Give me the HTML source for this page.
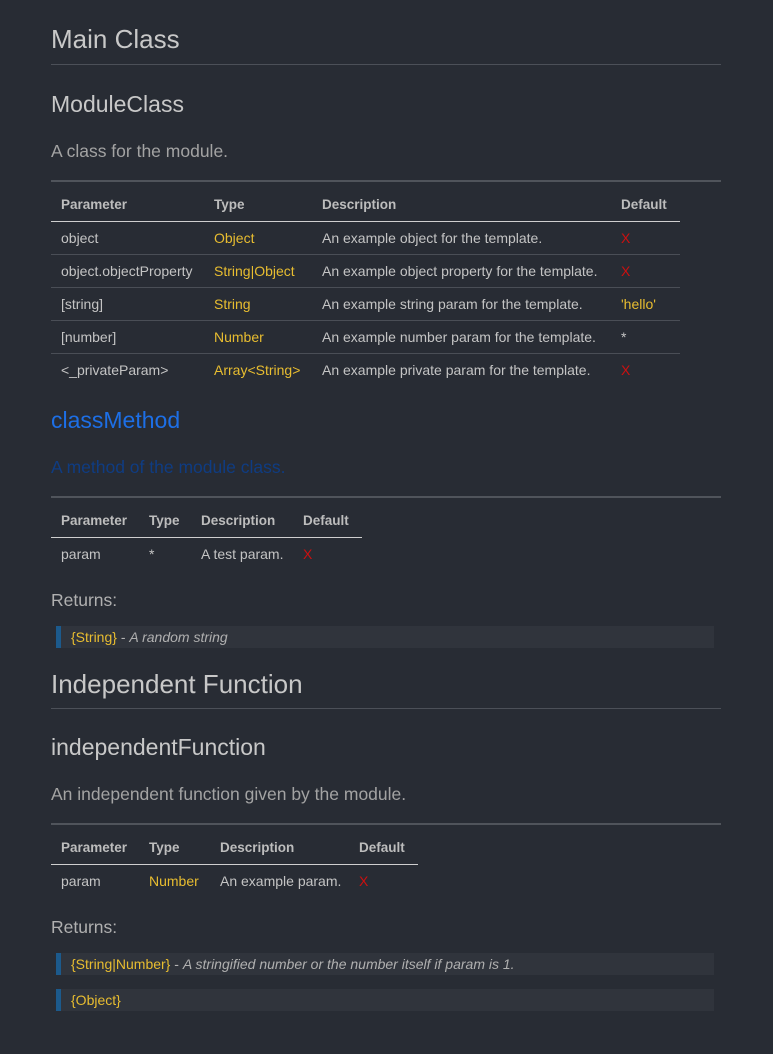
<!DOCTYPE html><html><head><style>
body{margin:0;background:#282c34;width:773px;height:1054px;position:relative;overflow:hidden;font-family:"Liberation Sans",sans-serif;color:#c9c9c9}
.a{position:absolute;white-space:nowrap}
.h1{font-size:26px;color:#c8c8c8}
.h2{font-size:23px;color:#c8c8c8}
.p{font-size:17.5px;color:#a3a3a3}
.line{position:absolute;left:51px;width:670px;height:1px;background:#4c5058}
.hr{position:absolute;left:51px;width:670px;height:2px;background:#50545b}
.t{font-size:14px;color:#c4c4c4}
.b{font-weight:bold;color:#bdbdbd;font-size:13.5px}
.y{color:#e8bd30}.r{color:#cc1010}
.hl{position:absolute;left:51px;height:1px;background:#cfcfcf}
.rl{position:absolute;left:51px;height:1px;background:#4a4e56}
.bq{position:absolute;left:56px;width:658px;height:22px;background:#30343c;border-left:5px solid #1c5a8c;box-sizing:border-box;font-size:14px;line-height:22px;padding-left:10px;color:#b4b4b4}
.bq i{color:#b0b0b0}
</style></head><body>
<div class="a h1" style="left:51px;top:24px">Main Class</div>
<div class="line" style="top:64px"></div>
<div class="a h2" style="left:51px;top:91px">ModuleClass</div>
<div class="a p" style="left:51px;top:141px">A class for the module.</div>
<div class="hr" style="top:180px"></div>
<div class="a t b" style="left:61px;top:197px">Parameter</div>
<div class="a t b" style="left:214px;top:197px">Type</div>
<div class="a t b" style="left:322px;top:197px">Description</div>
<div class="a t b" style="left:621px;top:197px">Default</div>
<div class="hl" style="top:221px;width:629px"></div>
<div class="a t" style="left:61px;top:230px">object</div><div class="a t y" style="left:214px;top:230px">Object</div><div class="a t" style="left:322px;top:230px">An example object for the template.</div><div class="a t r" style="left:621px;top:230px">X</div>
<div class="rl" style="top:254px;width:629px"></div>
<div class="a t" style="left:61px;top:263px">object.objectProperty</div><div class="a t y" style="left:214px;top:263px">String|Object</div><div class="a t" style="left:322px;top:263px">An example object property for the template.</div><div class="a t r" style="left:621px;top:263px">X</div>
<div class="rl" style="top:287px;width:629px"></div>
<div class="a t" style="left:61px;top:296px">[string]</div><div class="a t y" style="left:214px;top:296px">String</div><div class="a t" style="left:322px;top:296px">An example string param for the template.</div><div class="a t y" style="left:621px;top:296px">'hello'</div>
<div class="rl" style="top:320px;width:629px"></div>
<div class="a t" style="left:61px;top:329px">[number]</div><div class="a t y" style="left:214px;top:329px">Number</div><div class="a t" style="left:322px;top:329px">An example number param for the template.</div><div class="a t" style="left:621px;top:329px">*</div>
<div class="rl" style="top:353px;width:629px"></div>
<div class="a t" style="left:61px;top:362px">&lt;_privateParam&gt;</div><div class="a t y" style="left:214px;top:362px">Array&lt;String&gt;</div><div class="a t" style="left:322px;top:362px">An example private param for the template.</div><div class="a t r" style="left:621px;top:362px">X</div>

<div class="a h2" style="left:51px;top:407px;color:#1d6fe6">classMethod</div>
<div class="a p" style="left:51px;top:457px;color:#0f3c82">A method of the module class.</div>
<div class="hr" style="top:496px"></div>
<div class="a t b" style="left:61px;top:513px">Parameter</div><div class="a t b" style="left:149px;top:513px">Type</div><div class="a t b" style="left:201px;top:513px">Description</div><div class="a t b" style="left:303px;top:513px">Default</div>
<div class="hl" style="top:537px;width:311px"></div>
<div class="a t" style="left:61px;top:546px">param</div><div class="a t" style="left:149px;top:546px">*</div><div class="a t" style="left:201px;top:546px">A test param.</div><div class="a t r" style="left:303px;top:546px">X</div>
<div class="a p" style="left:51px;top:590px;color:#b0b0b0">Returns:</div>
<div class="bq" style="top:626px"><span class="y">{String}</span> - <i>A random string</i></div>

<div class="a h1" style="left:51px;top:669px">Independent Function</div>
<div class="line" style="top:708px"></div>
<div class="a h2" style="left:51px;top:734px">independentFunction</div>
<div class="a p" style="left:51px;top:784px">An independent function given by the module.</div>
<div class="hr" style="top:823px"></div>
<div class="a t b" style="left:61px;top:840px">Parameter</div><div class="a t b" style="left:149px;top:840px">Type</div><div class="a t b" style="left:220px;top:840px">Description</div><div class="a t b" style="left:359px;top:840px">Default</div>
<div class="hl" style="top:864px;width:367px"></div>
<div class="a t" style="left:61px;top:873px">param</div><div class="a t y" style="left:149px;top:873px">Number</div><div class="a t" style="left:220px;top:873px">An example param.</div><div class="a t r" style="left:359px;top:873px">X</div>
<div class="a p" style="left:51px;top:917px;color:#b0b0b0">Returns:</div>
<div class="bq" style="top:953px"><span class="y">{String|Number}</span> - <i>A stringified number or the number itself if param is 1.</i></div>
<div class="bq" style="top:989px"><span class="y">{Object}</span></div>
</body></html>
